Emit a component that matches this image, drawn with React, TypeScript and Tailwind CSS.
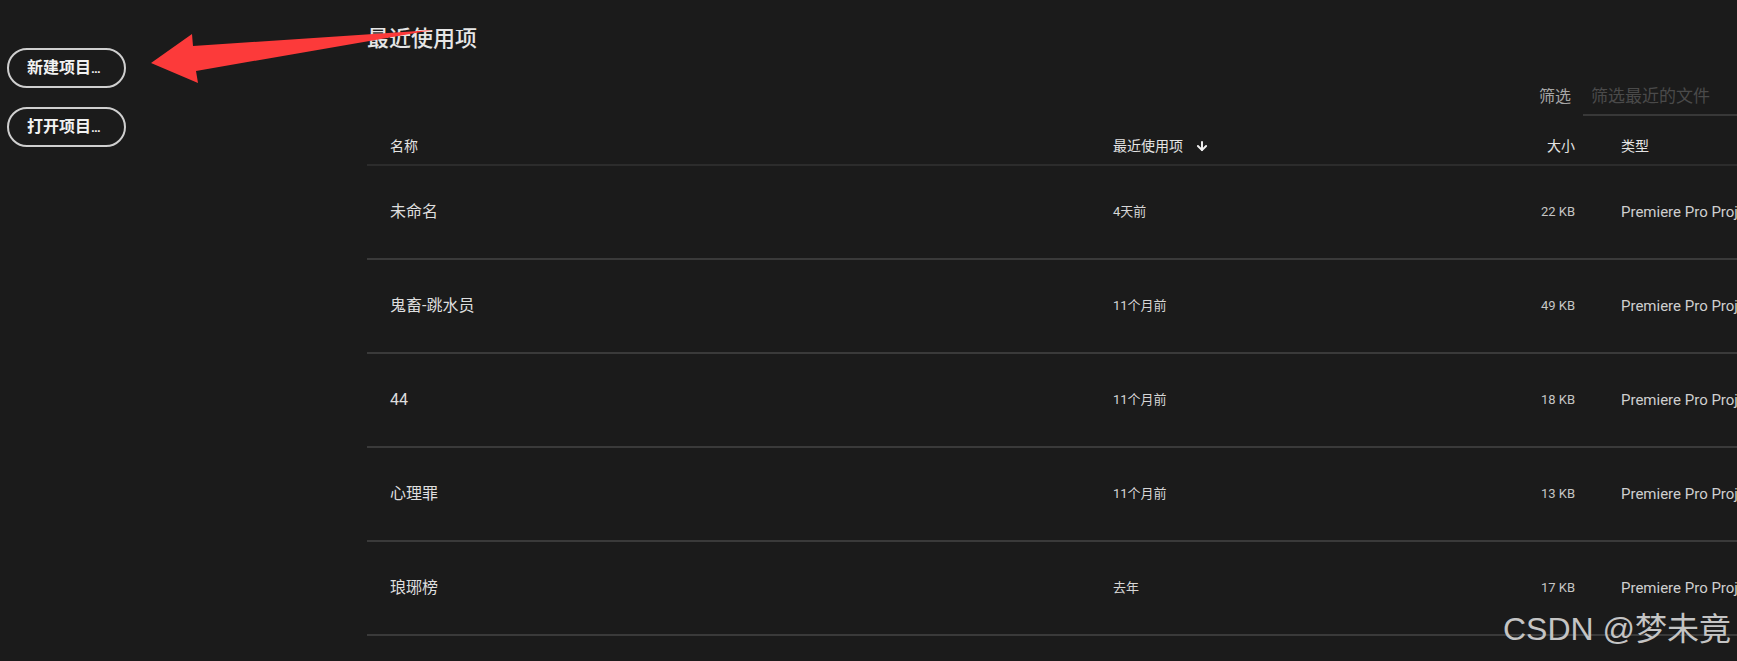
import { ArrowDown } from "lucide-react";

interface RecentItem {
  name: string;
  used: string;
  size: string;
  type: string;
}

const recentItems: RecentItem[] = [
  { name: "未命名", used: "4天前", size: "22 KB", type: "Premiere Pro Project" },
  { name: "鬼畜-跳水员", used: "11个月前", size: "49 KB", type: "Premiere Pro Project" },
  { name: "44", used: "11个月前", size: "18 KB", type: "Premiere Pro Project" },
  { name: "心理罪", used: "11个月前", size: "13 KB", type: "Premiere Pro Project" },
  { name: "琅琊榜", used: "去年", size: "17 KB", type: "Premiere Pro Project" },
];

const fontClass = "font-['Roboto','Noto_Sans_CJK_SC',sans-serif]";
const rowGrid = "grid grid-cols-[723px_362px_100px_1fr] pl-[23px]";

function SideButton({ label }: { label: string }) {
  return (
    <button
      type="button"
      className="flex h-[40px] w-[119px] items-center rounded-full border-2 border-[#cfcfcf] pl-[18px] text-[16px] font-bold text-[#f2f2f2]"
    >
      {label}
      <span className="font-['Roboto',sans-serif] text-[13px] leading-none">…</span>
    </button>
  );
}

function RedArrow() {
  return (
    <svg
      className="pointer-events-none absolute left-[150px] top-[28px]"
      width="285"
      height="58"
      viewBox="0 0 285 58"
    >
      <polygon points="1,35 42,6 43,18 283,2 46,43 48,55" fill="#fc3a3a" />
    </svg>
  );
}

export default function App() {
  return (
    <div className={`relative flex h-[661px] w-[1737px] overflow-hidden bg-[#1b1b1b] ${fontClass}`}>
      <aside className="flex w-[367px] shrink-0 flex-col items-start gap-[19px] pl-[7px] pt-[48px]">
        <SideButton label="新建项目" />
        <SideButton label="打开项目" />
      </aside>

      <main className="min-w-0 flex-1 overflow-hidden pt-[25px]">
        <div className="w-[1400px]">
          <h1 className="text-[22px] leading-[28px] font-medium text-[#e6e6e6]">最近使用项</h1>

          <div className="mt-[25px] flex h-[38px] items-center justify-end gap-[12px]">
            <span className="text-[16px] text-[#a6a6a6]">筛选</span>
            <input
              placeholder="筛选最近的文件"
              className="h-[38px] w-[184px] border-b-2 border-[#383838] bg-transparent pl-[8px] text-[17px] text-[#d0d0d0] outline-none placeholder:text-[#4a4a4a]"
            />
          </div>

          <div className={`${rowGrid} h-[50px] items-center border-b-2 border-[#2c2c2c] pt-[12px] text-[14px] text-[#e4e4e4]`}>
            <span>名称</span>
            <span className="flex items-center gap-[12px]">
              最近使用项
              <ArrowDown size={14} strokeWidth={3.4} className="text-[#eeeeee]" />
            </span>
            <span className="text-right">大小</span>
            <span className="pl-[46px]">类型</span>
          </div>

          {recentItems.map((item) => (
            <div key={item.name} className={`${rowGrid} h-[94px] items-center border-b-2 border-[#3a3a3a]`}>
              <span className="text-[16px] text-[#dedede]">{item.name}</span>
              <span className="text-[13px] text-[#d6d6d6]">{item.used}</span>
              <span className="text-right text-[13px] text-[#c6c6c6]">{item.size}</span>
              <span className="whitespace-nowrap pl-[46px] text-[15px] text-[#cfcfcf]">{item.type}</span>
            </div>
          ))}
        </div>
      </main>

      <RedArrow />

      <div className="pointer-events-none absolute right-[6px] top-[613px] font-['Liberation_Sans','Noto_Sans_CJK_SC',sans-serif] text-[32px] leading-[32px] text-[#c4c4c4]">
        CSDN @梦未竟
      </div>
    </div>
  );
}
